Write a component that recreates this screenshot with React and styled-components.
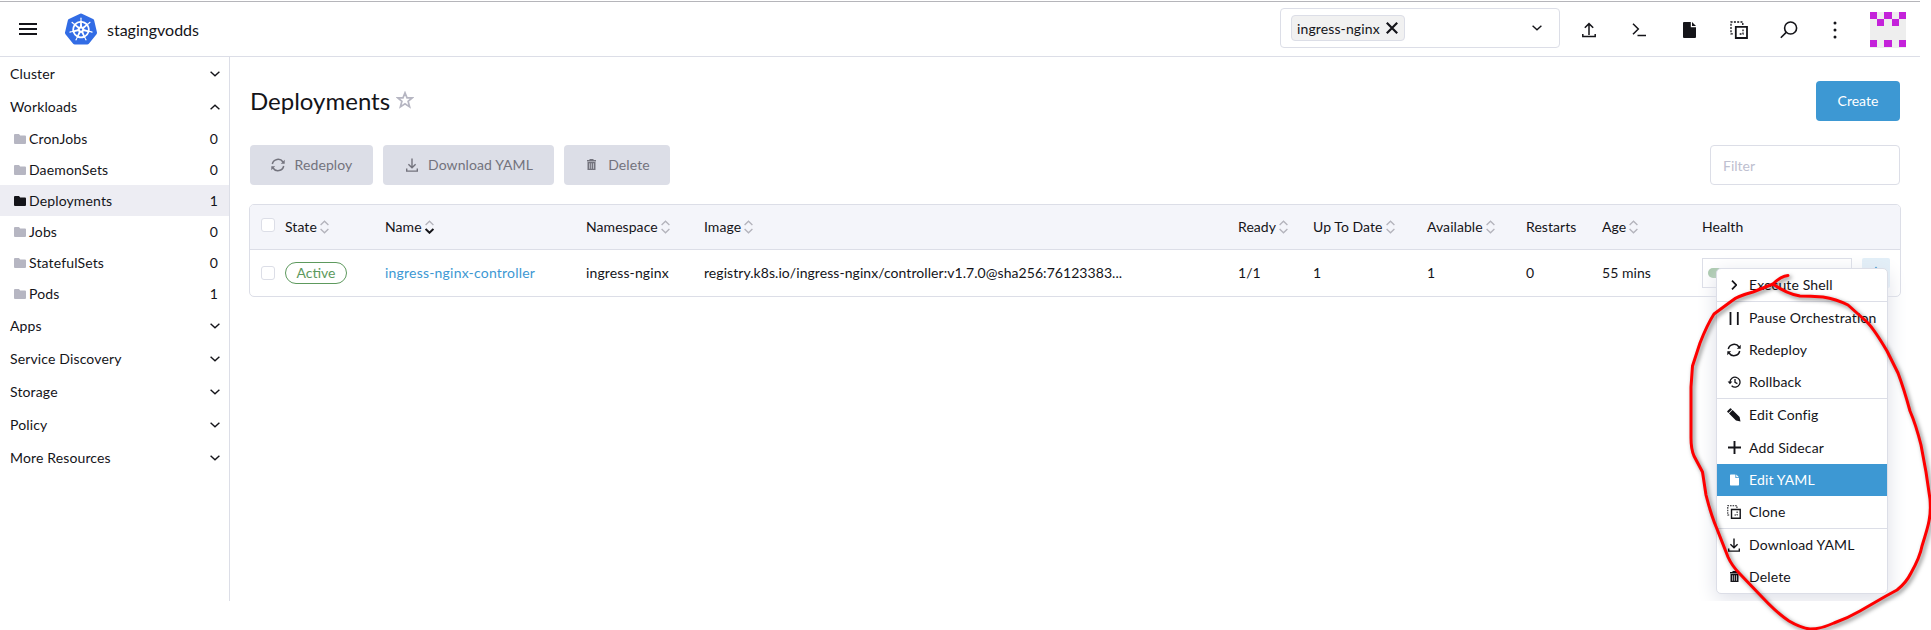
import React from 'react';
import styled, { createGlobalStyle, css } from 'styled-components';
import { SiKubernetes } from 'react-icons/si';

const INK = '#141419';
const LINE = '#dcdee7';
const BLUE = '#3d98d3';

const Global = createGlobalStyle`
  * { box-sizing: border-box; }
  body { margin: 0; background: #fff; color: ${INK}; font: 14px/21px Lato, sans-serif; }
`;

const Stage = styled.div`
  position: relative;
  width: 1931px;
  height: 630px;
  overflow: hidden;
`;

const Dashboard = styled.div`
  position: relative;
  display: flex;
  flex-direction: column;
  width: 1920px;
  height: 601px;
  padding-top: 1px;
  overflow: hidden;
`;

const Header = styled.header`
  display: flex;
  align-items: center;
  flex: none;
  height: 56px;
  padding: 0 14px 0 19px;
  border-top: 1px solid #b5b5ba;
  border-bottom: 1px solid ${LINE};
`;

const Burger = styled.div`
  display: grid;
  gap: 3px;
  width: 18px;
  margin-right: 28px;
  span { height: 2px; background: ${INK}; }
`;

const ClusterName = styled.div`
  margin: 0 auto 0 10px;
  font-size: 16px;
`;

const NamespaceSelect = styled.div`
  display: flex;
  align-items: center;
  width: 280px;
  height: 40px;
  margin: 0 4px 2px 0;
  padding: 0 17px 0 10px;
  border: 1px solid ${LINE};
  border-radius: 4px;
  > svg { margin-left: auto; }
`;

const Tag = styled.span`
  display: flex;
  align-items: center;
  gap: 6px;
  height: 26px;
  padding: 0 6px 0 5px;
  border: 1px solid ${LINE};
  border-radius: 4px;
  background: #f1f1f1;
  letter-spacing: 0.12px;
`;

const HeaderAction = styled.div`
  display: flex;
  justify-content: center;
  width: 50px;
  padding-top: 2px;
  &:nth-last-child(2) { width: 42px; }
`;

const Avatar = styled.div`
  display: grid;
  grid-template: repeat(5, 7.2px) / repeat(5, 7.2px);
  width: 36px;
  height: 36px;
  margin: 1px 0 0 14px;
  background: #eee;
`;

const AvatarCell = styled.span`
  background: ${(p) => (p.$on ? '#c422da' : 'transparent')};
`;

const Body = styled.div`
  display: flex;
  flex: 1;
`;

const Sidebar = styled.nav`
  width: 230px;
  border-right: 1px solid ${LINE};
  letter-spacing: 0.14px;
`;

const NavGroup = styled.div`
  display: flex;
  align-items: center;
  justify-content: space-between;
  height: 33px;
  padding: 0 9px 0 10px;
`;

const NavItem = styled.div`
  display: flex;
  align-items: center;
  height: 31px;
  padding: 0 11px 0 14px;
  background: ${(p) => (p.$active ? '#ededf3' : 'transparent')};
  svg { color: ${(p) => (p.$active ? INK : '#b6b6c2')}; margin: 1px 3px 0 0; }
  span { flex: 1; }
`;

const Main = styled.main`
  flex: 1;
  padding: 24px 19px 0 19px;
`;

const TitleRow = styled.div`
  display: flex;
  align-items: center;
  height: 40px;
  margin: 0 1px 24px;
  > svg { margin: 0 auto 3px 6px; }
`;

const Title = styled.h1`
  margin: 0;
  font-size: 24px;
  font-weight: 400;
  line-height: 32px;
`;

const Toolbar = styled.div`
  display: flex;
  gap: 10px;
  margin: 0 1px 19px;
`;

const Button = styled.div`
  display: flex;
  align-items: center;
  justify-content: center;
  width: ${(p) => p.$width}px;
  height: 40px;
  padding-bottom: 1px;
  border-radius: 4px;
  background: ${LINE};
  color: #73737d;
  letter-spacing: 0.1px;
  ${(p) => p.$primary && css`background: ${BLUE}; color: #fff; letter-spacing: 0;`}
`;

const ButtonIcon = styled.span`
  display: flex;
  justify-content: center;
  width: 15px;
  margin-right: 9px;
`;

const Filter = styled.div`
  width: 190px;
  height: 40px;
  margin-left: auto;
  padding: 9px 12px;
  border: 1px solid ${LINE};
  border-radius: 4px;
  color: #bec0d0;
`;

const Table = styled.div`
  border: 1px solid ${LINE};
  border-radius: 5px;
  overflow: hidden;
`;

const Row = styled.div`
  display: grid;
  grid-template-columns: 24px 100px 201px 118px 534px 75px 114px 99px 76px 100px 160px 28px;
  align-items: center;
  height: 46px;
  padding-left: 11px;
  ${(p) => p.$head && css`
    height: 45px;
    background: #f4f5fa;
    border-bottom: 1px solid ${LINE};
  `}
`;

const Cell = styled.div`
  display: flex;
  align-items: center;
  gap: 3px;
  padding-bottom: 1px;
  color: ${(p) => (p.$link ? BLUE : INK)};
  letter-spacing: ${(p) => p.$track || 0.06}px;
  white-space: nowrap;
`;

const Checkbox = styled.span`
  width: 14px;
  height: 14px;
  margin-top: ${(p) => (p.$head ? '-4px' : '0')};
  border: 1px solid ${LINE};
  border-radius: 3px;
  background: #fff;
`;

const Badge = styled.span`
  width: 62px;
  height: 22px;
  border: 1px solid #5d995d;
  border-radius: 11px;
  color: #5d995d;
  line-height: 20px;
  text-align: center;
`;

const HealthBox = styled.div`
  display: flex;
  align-items: center;
  width: 150px;
  height: 30px;
  padding-left: 5px;
  border: 1px solid ${LINE};
  span { width: 60px; height: 10px; border-radius: 5px; background: #a7c7aa; }
`;

const RowAction = styled.div`
  display: flex;
  align-items: center;
  justify-content: center;
  height: 30px;
  border-radius: 2px;
  background: #e2eff8;
  color: ${BLUE};
`;

const Menu = styled.div`
  position: absolute;
  left: 1716px;
  top: 268px;
  width: 172px;
  border: 1px solid ${LINE};
  border-radius: 5px;
  background: #fff;
  box-shadow: 0 5px 20px ${LINE};
`;

const MenuItem = styled.div`
  display: flex;
  align-items: center;
  height: 32.1px;
  padding: 0 0 1px 8px;
  white-space: nowrap;
  letter-spacing: 0.14px;
  ${(p) => p.$active && css`background: ${BLUE}; color: #fff;`}
`;

const MenuIcon = styled.span`
  display: flex;
  justify-content: center;
  width: 18px;
  margin: 1px 6px 0 0;
`;

const Divider = styled.div`
  height: 1px;
  background: ${LINE};
`;

const Annotation = styled.svg`
  position: absolute;
  inset: 0;
  filter: drop-shadow(2px 2px 2px rgba(0, 0, 0, 0.5));
`;

const Svg = ({ w = 16, h = w, box = `0 0 ${w} ${h}`, sw = 1.5, children }) => (
  <svg width={w} height={h} viewBox={box} fill="none" stroke="currentColor" strokeWidth={sw}>{children}</svg>
);

const Chevron = ({ up }) => (
  <Svg w={10} h={6} sw={1.4}><path d={up ? 'M.6 5.2 5 1.2 9.4 5.2' : 'M.6 .8 5 4.8 9.4 .8'} /></Svg>
);
const Close = () => <Svg w={12} sw={2.2}><path d="M.8 .8 11.2 11.2M11.2 .8 .8 11.2" /></Svg>;
const Upload = () => <Svg w={14} h={16}><path d="M7 13V1.6M2.8 5.8 7 1.6l4.2 4.2M.8 12v2.6h12.4V12" /></Svg>;
const Download = ({ w = 12, h = 14 }) => (
  <Svg w={w} h={h} box="0 0 12 14" sw={1.4}><path d="M6 .5v9.2M2.4 6.2 6 9.8l3.6-3.6M.7 10.5v2.6h10.6v-2.6" /></Svg>
);
const Shell = () => <Svg w={14} h={14}><path d="M1 .8 6.3 6 1 11.2M5.5 12.6H14" /></Svg>;
const File = ({ w = 13, h = 16 }) => (
  <svg width={w} height={h} viewBox="0 0 13 16" fill="currentColor">
    <path d="M1 0h6.8v5.2H13V15q0 1-1 1H1q-1 0-1-1V1q0-1 1-1zM9 0l4 4H9z" />
  </svg>
);
const Clone = ({ w = 18 }) => (
  <Svg w={w} box="0 0 18 18">
    <path d="M5.8 5.8h11.2v11.2H5.800z" strokeWidth="1.8" />
    <path d="M12.8 4V1H1v11.8h3" strokeDasharray="2 1.3" strokeWidth="1.3" />
    <path d="M13 8.500v4.500H8.500" strokeDasharray="1.8 1.2" strokeWidth="1.3" />
  </Svg>
);
const Search = () => <Svg w={18} sw={1.6}><circle cx="10.6" cy="7" r="6" /><path d="M6.2 11.4 .8 16.8" /></Svg>;
const Dots = ({ h = 18, r = 1.5 }) => (
  <svg width="4" height={h} viewBox={`0 0 4 ${h}`} fill="currentColor">
    <circle cx="2" cy="2" r={r} /><circle cx="2" cy={h / 2} r={r} /><circle cx="2" cy={h - 2} r={r} />
  </svg>
);
const Folder = () => (
  <svg width="12" height="10" viewBox="0 0 12 10" fill="currentColor">
    <path d="M1 0h4l1.2 1.5H11q1 0 1 1V9q0 1-1 1H1Q0 10 0 9V1q0-1 1-1z" />
  </svg>
);
const Star = () => (
  <svg width="18" height="18" viewBox="0 0 18 18" fill="none" stroke="#b6b6c2" strokeWidth="1.7">
    <path d="m9 1.8 2 5h5.2l-4.1 3.5 1.5 5.6L9 12.8l-4.6 3.1 1.5-5.6L1.8 6.8H7z" />
  </svg>
);
const Redeploy = () => (
  <Svg w={14} sw={1.5}>
    <path d="M1.300 6A5.900 5.900 0 0 1 12 4M12.7 8A5.900 5.900 0 0 1 2 10" />
    <path d="M13.7 1.8v3.900H9.8zM.3 12.2V8.300h3.900z" fill="currentColor" stroke="none" />
  </Svg>
);
const Trash = () => (
  <svg width="9" height="11" viewBox="0 0 9 11" fill="currentColor">
    <path d="M0 1h2.5V0h4v1H9v1.5H0z" />
    <path fillRule="evenodd" d="M.5 3h8v8h-8zM2.4 4.2v5.5h.7V4.2zM4.2 4.2v5.5h.6V4.2zM6 4.2v5.5h.7V4.2z" />
  </svg>
);
const Right = () => <Svg w={6} h={10} sw={1.7}><path d="M1 .7 5.2 5 1 9.3" /></Svg>;
const Pause = () => <Svg w={10} h={13} sw={1.8}><path d="M1.5 0v13M8.800 0v13" /></Svg>;
const History = () => (
  <Svg w={14} h={12} sw={1.3}>
    <path d="M3 6.2A5 5 0 1 1 4.6 9.8M8 3v3.4l2.4 1.2" />
    <path d="M.6 5.6h4.8L3 8.3z" fill="currentColor" stroke="none" />
  </Svg>
);
const Pencil = () => (
  <svg width="14" height="14" viewBox="0 0 14 14" fill="currentColor">
    <path d="M.4 3 3 .4q.5-.5 1 0l1 1-3.6 3.6-1-1q-.5-.5 0-1zM2 5.6 5.6 2l7 7 .9 4.5L9 12.6z" />
  </svg>
);
const Plus = () => <Svg w={13} sw={1.9}><path d="M6.5 0v13M0 6.5h13" /></Svg>;
const SortIcon = ({ active }) => (
  <svg width="9" height="14" viewBox="0 0 9 14" fill="none" strokeWidth="1.3" stroke="#b3b3bb">
    <path d="M.6 5 4.5 1.2 8.4 5" />
    <path d="M.6 9 4.5 12.8 8.4 9" stroke={active ? INK : undefined} strokeWidth={active ? 1.9 : 1.3} />
  </svg>
);

const AVATAR = '10101' + '01010' + '00000' + '00000' + '10101';
const WORKLOADS = [['CronJobs', 0], ['DaemonSets', 0], ['Deployments', 1], ['Jobs', 0], ['StatefulSets', 0], ['Pods', 1]];
const GROUPS = ['Apps', 'Service Discovery', 'Storage', 'Policy', 'More Resources'];
const COLUMNS = [['State', 1], ['Name', 1], ['Namespace', 1], ['Image', 1], ['Ready', 1], ['Up To Date', 1], ['Available', 1], ['Restarts', 0], ['Age', 1], ['Health', 0]];
const MENU = [
  [['Execute Shell', <Right />]],
  [['Pause Orchestration', <Pause />], ['Redeploy', <Redeploy />], ['Rollback', <History />]],
  [['Edit Config', <Pencil />], ['Add Sidecar', <Plus />], ['Edit YAML', <File w={9} h={12} />], ['Clone', <Clone w={14} />]],
  [['Download YAML', <Download />], ['Delete', <Trash />]],
];

export default function App() {
  return (
    <Stage>
      <Global />
      <Dashboard>
        <Header>
          <Burger><span /><span /><span /></Burger>
          <SiKubernetes size={32} color="#326ce5" />
          <ClusterName>stagingvodds</ClusterName>
          <NamespaceSelect><Tag>ingress-nginx<Close /></Tag><Chevron /></NamespaceSelect>
          {[<Upload />, <Shell />, <File />, <Clone />, <Search />, <Dots />].map((icon, i) => (
            <HeaderAction key={i}>{icon}</HeaderAction>
          ))}
          <Avatar>{[...AVATAR].map((c, i) => <AvatarCell key={i} $on={c === '1'} />)}</Avatar>
        </Header>
        <Body>
          <Sidebar>
            <NavGroup>Cluster<Chevron /></NavGroup>
            <NavGroup>Workloads<Chevron up /></NavGroup>
            {WORKLOADS.map(([name, count]) => (
              <NavItem key={name} $active={name === 'Deployments'}><Folder /><span>{name}</span>{count}</NavItem>
            ))}
            {GROUPS.map((name) => <NavGroup key={name}>{name}<Chevron /></NavGroup>)}
          </Sidebar>
          <Main>
            <TitleRow>
              <Title>Deployments</Title>
              <Star />
              <Button $primary $width={84}>Create</Button>
            </TitleRow>
            <Toolbar>
              <Button $width={123}><ButtonIcon><Redeploy /></ButtonIcon>Redeploy</Button>
              <Button $width={171}><ButtonIcon><Download /></ButtonIcon>Download YAML</Button>
              <Button $width={106}><ButtonIcon><Trash /></ButtonIcon>Delete</Button>
              <Filter>Filter</Filter>
            </Toolbar>
            <Table>
              <Row $head>
                <Checkbox $head />
                {COLUMNS.map(([name, sortable]) => (
                  <Cell key={name}>{name}{sortable ? <SortIcon active={name === 'Name'} /> : null}</Cell>
                ))}
              </Row>
              <Row>
                <Checkbox />
                <Badge>Active</Badge>
                <Cell $link $track={0.2}>ingress-nginx-controller</Cell>
                <Cell $track={0.12}>ingress-nginx</Cell>
                <Cell>registry.k8s.io/ingress-nginx/controller:v1.7.0@sha256:76123383...</Cell>
                <Cell>1/1</Cell>
                <Cell>1</Cell>
                <Cell>1</Cell>
                <Cell>0</Cell>
                <Cell>55 mins</Cell>
                <HealthBox><span /></HealthBox>
                <RowAction><Dots h={14} r={1.2} /></RowAction>
              </Row>
            </Table>
          </Main>
        </Body>
        <Menu>
          {MENU.map((group, g) => (
            <React.Fragment key={g}>
              {g > 0 && <Divider />}
              {group.map(([label, icon]) => (
                <MenuItem key={label} $active={label === 'Edit YAML'}><MenuIcon>{icon}</MenuIcon>{label}</MenuItem>
              ))}
            </React.Fragment>
          ))}
        </Menu>
      </Dashboard>
      <Annotation width="1931" height="630" fill="none" stroke="#fe0000" strokeWidth="3" strokeLinecap="round" strokeLinejoin="round">
        <path d="M1788 275.5Q1781 276 1773 284L1753 292Q1738 296 1733 300L1714 314Q1707 325 1700 343L1692.500 366L1691 387V438Q1691 449 1694 456L1702.500 472L1706 495Q1711 515 1717 529L1728 557Q1732 566 1740 574L1762 597Q1778 614 1789 621Q1801 628 1810 629Q1821 629 1834 623Q1848 618 1860 611L1886 596L1897 590Q1906 583 1911 573Q1920 557 1922 546Q1928 527 1929 521Q1931 512 1930 499L1926 472L1921 445Q1916 425 1910 411Q1904 389 1898 373L1887 351Q1874 329 1867 322L1848 305Q1836 299 1823 297Q1810 296 1800 296Q1787 294 1773 284" />
      </Annotation>
    </Stage>
  );
}
